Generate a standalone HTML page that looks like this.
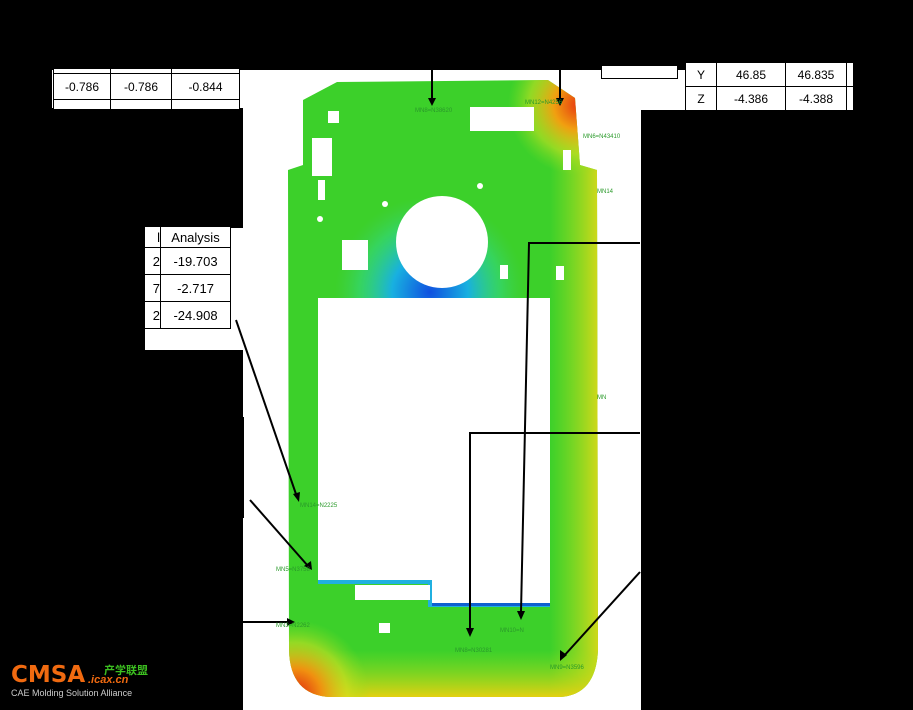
<!DOCTYPE html>
<html><head><meta charset="utf-8"><style>
html,body{margin:0;padding:0;background:#000;width:913px;height:710px;overflow:hidden;position:relative;font-family:"Liberation Sans","Noto Sans CJK SC",sans-serif}
.w{position:absolute;background:#fff}
table{position:absolute;border-collapse:collapse;background:#fff;font-size:12px}
td{border:1px solid #000;text-align:center;padding:0;color:#000}
</style></head><body>
<div class="w" style="left:243px;top:70px;width:398px;height:640px"></div>
<div class="w" style="left:600px;top:70px;width:251px;height:40px"></div>
<div class="w" style="left:52px;top:70px;width:191px;height:38px"></div>
<div class="w" style="left:145px;top:228px;width:98px;height:122px"></div>

<table style="left:53px;top:68px">
<tr style="height:5px"><td style="width:56px"></td><td style="width:60px"></td><td style="width:67px"></td></tr>
<tr style="height:26px"><td>-0.786</td><td>-0.786</td><td>-0.844</td></tr>
<tr style="height:10px"><td></td><td></td><td></td></tr>
</table>
<div style="position:absolute;left:601px;top:66px;width:75px;height:12px;border:1px solid #000;border-top:none;background:#fff"></div>
<table style="left:685px;top:62px">
<tr style="height:24px"><td style="width:30px">Y</td><td style="width:68px">46.85</td><td style="width:60px">46.835</td><td style="width:6px;border-right:none"></td></tr>
<tr style="height:24px"><td>Z</td><td>-4.386</td><td>-4.388</td><td style="border-right:none"></td></tr>
</table>
<table style="left:145px;top:226px;font-size:13px">
<tr style="height:21px"><td style="width:15px;border-left:none;text-align:right">l</td><td style="width:69px">Analysis</td></tr>
<tr style="height:27px"><td style="border-left:none;text-align:right">2</td><td>-19.703</td></tr>
<tr style="height:27px"><td style="border-left:none;text-align:right">7</td><td>-2.717</td></tr>
<tr style="height:27px"><td style="border-left:none;text-align:right">2</td><td>-24.908</td></tr>
</table>
<div style="position:absolute;left:243px;top:417px;width:1px;height:101px;background:#000"></div>

<svg width="913" height="710" style="position:absolute;left:0;top:0">
<defs>
<radialGradient id="tr" cx="578" cy="105" r="70" gradientUnits="userSpaceOnUse"><stop offset="0" stop-color="#e83a10"/><stop offset=".35" stop-color="#f0a010"/><stop offset=".7" stop-color="#c8e020" stop-opacity=".6"/><stop offset="1" stop-color="#8ee020" stop-opacity="0"/></radialGradient>
<radialGradient id="bl" cx="295" cy="695" r="75" gradientUnits="userSpaceOnUse"><stop offset="0" stop-color="#e02010"/><stop offset=".35" stop-color="#f09010"/><stop offset=".7" stop-color="#d0e020" stop-opacity=".6"/><stop offset="1" stop-color="#90e020" stop-opacity="0"/></radialGradient>
<linearGradient id="bt" x1="0" y1="650" x2="0" y2="698" gradientUnits="userSpaceOnUse"><stop offset="0" stop-color="#a0e020" stop-opacity="0"/><stop offset="1" stop-color="#e8d010"/></linearGradient>
<linearGradient id="rt" x1="550" y1="0" x2="600" y2="0" gradientUnits="userSpaceOnUse"><stop offset="0" stop-color="#a8e020" stop-opacity="0"/><stop offset="1" stop-color="#d8d818"/></linearGradient>
<radialGradient id="blue" cx="430" cy="292" r="95" gradientUnits="userSpaceOnUse"><stop offset="0" stop-color="#1050e0"/><stop offset=".4" stop-color="#18b0e0"/><stop offset=".75" stop-color="#30d890" stop-opacity=".5"/><stop offset="1" stop-color="#40d060" stop-opacity="0"/></radialGradient>
<clipPath id="cp"><path d="M337 82 L548 80 L575 98 L580 165 L597 170 L598 650 Q596 695 560 697 L330 697 Q290 695 289 650 L288 170 L303 165 L303 100 Z"/></clipPath>
</defs>
<g clip-path="url(#cp)">
<rect x="280" y="70" width="330" height="640" fill="#3cd02a"/>
<rect x="280" y="70" width="330" height="640" fill="url(#rt)"/>
<rect x="280" y="70" width="330" height="640" fill="url(#blue)"/>
<rect x="280" y="70" width="330" height="640" fill="url(#bt)"/>
<rect x="280" y="70" width="330" height="640" fill="url(#tr)"/>
<rect x="280" y="70" width="330" height="640" fill="url(#bl)"/>
<path d="M318 580 H432 V603 H550" fill="none" stroke="#20b0e0" stroke-width="8"/>
<path d="M432 603 H550" fill="none" stroke="#1060d0" stroke-width="6"/>
</g>
<g fill="#fff">
<path d="M318 298 L550 298 L550 603 L432 603 L432 580 L318 580 Z"/>
<circle cx="442" cy="242" r="46"/>
<rect x="470" y="107" width="64" height="24"/>
<rect x="312" y="138" width="20" height="38"/>
<rect x="328" y="111" width="11" height="12"/>
<rect x="342" y="240" width="26" height="30"/>
<rect x="355" y="585" width="75" height="15"/>
<rect x="563" y="150" width="8" height="20"/>
<rect x="318" y="180" width="7" height="20"/>
<circle cx="480" cy="186" r="3"/><circle cx="385" cy="204" r="3"/><circle cx="320" cy="219" r="3"/>
<rect x="500" y="265" width="8" height="14"/><rect x="556" y="266" width="8" height="14"/>
<rect x="379" y="623" width="11" height="10"/>
</g>
<g fill="none" stroke="#000" stroke-width="2">
<path d="M432 60 V100"/><path d="M560 60 V100"/>
<path d="M640 243 H529 L521 612"/>
<path d="M640 433 H470 L470 630"/>
<path d="M236 320 L297 497"/>
<path d="M250 500 L308 566"/>
<path d="M243 622 H288"/>
<path d="M640 572 L563 657"/>
</g>
<g fill="#000">
<path d="M428 98 L436 98 L432 106 Z"/><path d="M556 98 L564 98 L560 106 Z"/>
<path d="M517 611 L525 611 L521 620 Z"/><path d="M466 628 L474 628 L470 637 Z"/>
<path d="M293 494 L300 492 L299 502 Z"/><path d="M304 566 L311 561 L312 570 Z"/>
<path d="M287 618 L287 626 L295 622 Z"/><path d="M560 650 L567 655 L560 661 Z"/>
</g>
<g fill="#2a9a2a" font-size="6" font-family="Liberation Sans,sans-serif">
<text x="415" y="112">MN8=N38620</text><text x="525" y="104">MN12=N4256</text>
<text x="583" y="138">MN6=N43410</text><text x="597" y="193">MN14</text>
<text x="300" y="507">MN14=N2225</text><text x="276" y="571">MN5=N3758</text>
<text x="276" y="627">MN3=N2262</text><text x="500" y="632">MN10=N</text>
<text x="455" y="652">MN8=N30281</text><text x="550" y="669">MN9=N3596</text>
<text x="597" y="399">MN</text>
</g>
</svg>
<div style="position:absolute;left:11px;top:662px;color:#f06a10;font-weight:bold;font-size:23px;font-family:'DejaVu Sans',sans-serif">CMSA</div>
<div style="position:absolute;left:88px;top:674px;color:#f06a10;font-weight:bold;font-size:11px;font-style:italic">.icax.cn</div>
<div style="position:absolute;left:104px;top:662px;color:#3cc020;font-weight:bold;font-size:11px">产学联盟</div>
<div style="position:absolute;left:11px;top:688px;color:#ccc;font-size:9px">CAE Molding Solution Alliance</div>
</body></html>
